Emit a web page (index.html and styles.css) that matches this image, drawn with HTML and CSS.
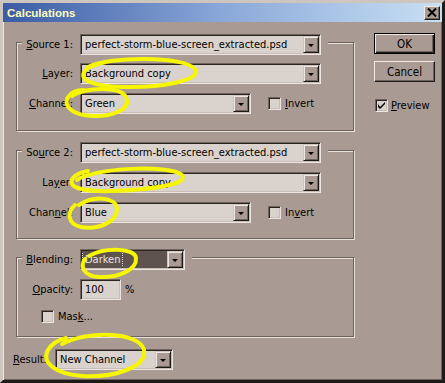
FILE: index.html
```html
<!DOCTYPE html>
<html>
<head>
<meta charset="utf-8">
<link rel="stylesheet" href="styles.css">
</head>
<body>
<div class="window">
  <div class="titlebar">
    <span class="title">Calculations</span>
    <span class="close"><svg width="10" height="9" viewBox="0 0 10 9"><path d="M1 0.5 L9 8.5 M9 0.5 L1 8.5" stroke="#000" stroke-width="2" fill="none"/></svg></span>
  </div>
  <div class="body">
    <div class="left">
      <div class="group g1">
        <div class="row head">
          <span class="lbl lbl-head"><u>S</u>ource 1:</span>
          <div class="select w241"><span class="val">perfect-storm-blue-screen_extracted.psd</span><span class="arrow"><i></i></span></div>
        </div>
        <div class="row r-layer">
          <span class="lbl"><u>L</u>ayer:</span>
          <div class="select w241"><span class="val">Background copy</span><span class="arrow"><i></i></span></div>
        </div>
        <div class="row r-chan">
          <span class="lbl"><u>C</u>hannel:</span>
          <div class="select w171"><span class="val">Green</span><span class="arrow"><i></i></span></div>
          <span class="check invert"><span class="box"></span><span><u>I</u>nvert</span></span>
        </div>
      </div>
      <div class="group g2">
        <div class="row head">
          <span class="lbl lbl-head">So<u>u</u>rce 2:</span>
          <div class="select w241"><span class="val">perfect-storm-blue-screen_extracted.psd</span><span class="arrow"><i></i></span></div>
        </div>
        <div class="row r-layer">
          <span class="lbl">La<u>y</u>er:</span>
          <div class="select w241"><span class="val">Background copy</span><span class="arrow"><i></i></span></div>
        </div>
        <div class="row r-chan">
          <span class="lbl">Chan<u>n</u>el:</span>
          <div class="select w171"><span class="val">Blue</span><span class="arrow"><i></i></span></div>
          <span class="check invert"><span class="box"></span><span>In<u>v</u>ert</span></span>
        </div>
      </div>
      <div class="group g3">
        <div class="row head">
          <span class="lbl lbl-head lbl-blend"><u>B</u>lending:</span>
          <div class="select w105 dark"><span class="val"><span class="focus">Darken</span></span><span class="arrow"><i></i></span></div>
        </div>
        <div class="row r-opac">
          <span class="lbl lbl-blend2"><u>O</u>pacity:</span>
          <div class="field w41"><span class="val">100</span></div>
          <span class="pct">%</span>
        </div>
        <div class="row r-mask">
          <span class="check mask"><span class="box"></span><span>Mas<u>k</u>...</span></span>
        </div>
      </div>
      <div class="row result">
        <span class="lbl-result"><u>R</u>esult:</span>
        <div class="select w118"><span class="val">New Channel</span><span class="arrow"><i></i></span></div>
      </div>
    </div>
    <div class="right">
      <div class="btn default"><span>OK</span></div>
      <div class="btn cancel"><span>Cancel</span></div>
      <span class="check preview"><span class="box"><svg width="7" height="7" viewBox="0 0 7 7"><path d="M0 2 L0 5 L2 7 L7 2 L7 0 L2 5 Z" fill="#000"/></svg></span><span><u>P</u>review</span></span>
    </div>
  </div>
  <svg class="marks" width="445" height="383" viewBox="0 0 445 383">
    <g fill="none" stroke="#f6f600" stroke-width="4" stroke-linecap="round" stroke-linejoin="round">
      <path d="M88 67 C110 56 184 56 195 69 C203 80 162 88 122 87 C92 86 78 80 85 71 C89 66 97 64 106 62"/>
      <path d="M72 96 C86 87 120 86 126 97 C132 110 110 117 92 116 C72 115 63 106 68 97 C71 92 77 90 84 90"/>
      <path d="M77 180 C92 168 170 164 182 175 C190 184 150 190 112 191 C82 192 66 187 73 178 C76 174 82 172 88 171"/>
      <path d="M79 205 C95 194 118 198 117 210 C116 222 99 230 81 227 C67 224 67 212 75 205"/>
      <path d="M89 256 C105 247 135 248 136 258 C137 270 118 278 99 277 C83 276 80 266 85 259"/>
      <path d="M62 344 C88 330 140 332 144 350 C147 368 112 378 82 376 C56 374 41 363 48 350 C52 343 58 340 66 338"/>
    </g>
  </svg>
</div>
</body>
</html>
```

FILE: styles.css
```css
* { box-sizing: border-box; }

html, body {
  margin: 0;
  padding: 0;
  background: #a99b93;
}

body {
  font-family: "DejaVu Sans Condensed", "DejaVu Sans", sans-serif;
  font-stretch: condensed;
  font-size: 11px;
  color: #000;
}

u { text-decoration: underline; text-underline-offset: 1px; }

.window {
  position: relative;
  width: 445px;
  height: 383px;
  background: #a99b93;
  border-style: solid;
  border-width: 3px;
  border-color: #cfc5bf #1e1a18 #1e1a18 #cfc5bf;
  box-shadow: inset 1px 1px 0 #efe8e4, inset -1px -1px 0 #6f635d;
  display: flex;
  flex-direction: column;
}

.titlebar {
  height: 19px;
  background: linear-gradient(to right, #3b5ba5 0%, #8aa8d8 50%, #c8e0f4 100%);
  display: flex;
  align-items: center;
  justify-content: space-between;
  padding: 0 2px 0 4px;
}

.title {
  font-family: "Liberation Sans", Arial, sans-serif;
  font-stretch: normal;
  font-weight: bold;
  font-size: 11.5px;
  color: #fdfdba;
}

.close {
  width: 16px;
  height: 14px;
  background: #a99b93;
  border-style: solid;
  border-width: 1px;
  border-color: #efe8e4 #1e1a18 #1e1a18 #efe8e4;
  box-shadow: inset -1px -1px 0 #6f635d;
  display: flex;
  align-items: center;
  justify-content: center;
  padding-bottom: 1px;
}

.body {
  display: flex;
  padding-left: 10px;
}

.left {
  width: 344px;
  display: flex;
  flex-direction: column;
}

.group {
  margin-left: 3px;
  width: 338px;
  border: 1px solid #6f635d;
  box-shadow: inset 1px 1px 0 #e8e0db, 1px 1px 0 #e8e0db;
}

.g1 { margin-top: 20px; padding-bottom: 16px; }
.g2 { margin-top: 19px; padding-bottom: 15px; }
.g3 { margin-top: 18px; padding-bottom: 13px; }

.row {
  display: flex;
  align-items: center;
}

.head {
  margin-top: -9px;
  margin-left: 5px;
  width: fit-content;
  padding-right: 7px;
  background: #a99b93;
  position: relative;
}

.lbl {
  width: 56px;
  margin-right: 7px;
  text-align: right;
  white-space: nowrap;
}

.lbl-head { width: 51px; }

.r-layer { margin-top: 8px; }
.g2 .r-layer { margin-top: 9px; }
.r-chan { margin-top: 9px; }
.r-opac { margin-top: 9px; }
.r-mask { margin-top: 10px; }

.select, .field {
  height: 21px;
  display: flex;
  align-items: center;
  background: #dad2cd;
  border: 1px solid;
  border-color: #6f635d #ece5e1 #ece5e1 #6f635d;
  box-shadow: inset 1px 1px 0 #2b2420, inset -1px -1px 0 #c9beb7;
  padding: 1px;
}

.w241 { width: 241px; }
.w171 { width: 171px; }
.w118 { width: 118px; }
.w105 { width: 105px; }
.w41 { width: 41px; }

.val {
  flex: 1;
  padding-left: 3px;
  white-space: nowrap;
  overflow: hidden;
}

.arrow {
  width: 16px;
  height: 17px;
  background: #a99b93;
  border-style: solid;
  border-width: 1px;
  border-color: #cfc5bf #1e1a18 #1e1a18 #cfc5bf;
  box-shadow: inset 1px 1px 0 #efe8e4, inset -1px -1px 0 #6f635d;
  display: flex;
  align-items: center;
  justify-content: center;
  flex: none;
}

.arrow i {
  display: block;
  width: 0;
  height: 0;
  border-left: 3px solid transparent;
  border-right: 3px solid transparent;
  border-top: 3px solid #000;
  margin-top: 1px;
}

.select.dark { background: #5e534e; color: #ece5e1; }
.focus {
  outline: 1px dotted #d8d0cb;
  outline-offset: 1px;
  padding: 0 1px;
}
.dark .val { padding-left: 2px; }

.pct { margin-left: 4px; }

.check {
  display: flex;
  align-items: center;
  gap: 4px;
}

.box {
  width: 13px;
  height: 13px;
  flex: none;
  background: #dad2cd;
  border: 1px solid;
  border-color: #6f635d #ece5e1 #ece5e1 #6f635d;
  box-shadow: inset 1px 1px 0 #2b2420, inset -1px -1px 0 #c9beb7;
  display: flex;
  align-items: center;
  justify-content: center;
}

.invert { margin-left: 17px; }
.mask { margin-left: 24px; }

.result { margin-top: 12px; }
.lbl-result { width: 42px; white-space: nowrap; }

.right {
  margin-left: 17px;
  padding-top: 11px;
  display: flex;
  flex-direction: column;
  width: 61px;
}

.btn {
  width: 61px;
  height: 21px;
  display: flex;
  align-items: center;
  justify-content: center;
  background: #a99b93;
  border: 1px solid;
  border-color: #efe8e4 #1e1a18 #1e1a18 #efe8e4;
  box-shadow: inset -1px -1px 0 #6f635d;
  font-size: 11.5px;
}

.btn.default {
  border: 1px solid #000;
  box-shadow: inset 1px 1px 0 #efe8e4, inset -1px -1px 0 #1e1a18, inset -2px -2px 0 #6f635d;
}

.btn.cancel { margin-top: 7px; }

.preview {
  margin-top: 17px;
  margin-left: 1px;
  gap: 3px;
}

.marks {
  position: absolute;
  left: -3px;
  top: -3px;
  pointer-events: none;
}
```
